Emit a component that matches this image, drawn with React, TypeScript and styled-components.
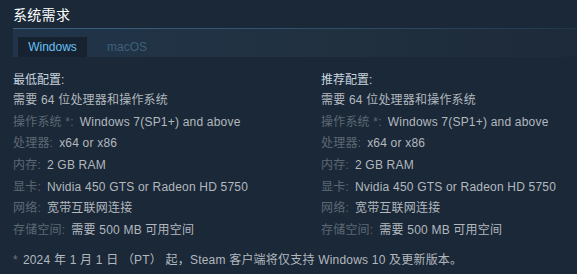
import React from "react";
import styled, { createGlobalStyle } from "styled-components";

const Global = createGlobalStyle`
  html, body { margin: 0; padding: 0; background: #1b2838; }
  body { font-family: "Liberation Sans", Arial, "Noto Sans CJK SC", sans-serif; }
`;

const Page = styled.div`
  width: 577px;
  height: 274px;
  box-sizing: border-box;
  padding: 8px 0 0 13px;
  background: #1b2838;
  overflow: hidden;
`;

const Title = styled.h2`
  margin: 0;
  font-size: 14px;
  line-height: 14px;
  font-weight: normal;
  color: #ffffff;
  letter-spacing: 0.3px;
`;

const TabBar = styled.div`
  margin-top: 6px;
  height: 29px;
  box-sizing: border-box;
  padding: 9px 0 0 5px;
  display: flex;
  align-items: flex-end;
  border-top: 1px solid;
  border-image: linear-gradient(90deg, #3b6282 0%, #2e4d66 60%, #22364a 100%) 1;
  background: linear-gradient(90deg, #213449 0%, #20303f 60%, #1d2a39 100%);
`;

const Tab = styled.div<{ $active?: boolean }>`
  height: 20px;
  width: ${(p) => (p.$active ? "69px" : "auto")};
  padding: ${(p) => (p.$active ? "0" : "0 0 0 20px")};
  display: flex;
  align-items: center;
  justify-content: ${(p) => (p.$active ? "center" : "flex-start")};
  font-size: 12px;
  color: ${(p) => (p.$active ? "#66c0f4" : "#3e6079")};
  background: ${(p) => (p.$active ? "#172231" : "transparent")};
`;

const Columns = styled.div`
  display: grid;
  grid-template-columns: 308px 1fr;
  margin-top: 14px;
`;

const Column = styled.div`
  display: flex;
  flex-direction: column;
`;

const Heading = styled.div`
  font-size: 12px;
  line-height: 18px;
  color: #c6d4df;
  margin-bottom: 2px;
`;

const Row = styled.div`
  font-size: 12px;
  line-height: 18px;
  height: 21.67px;
  color: #b2b8be;
  white-space: nowrap;
  letter-spacing: 0.2px;
`;

const Label = styled.span`
  color: #5b6874;
  margin-right: 6px;
`;

const Note = styled.div`
  margin-top: 8px;
  font-size: 12px;
  line-height: 18px;
  color: #b2b8be;
  white-space: nowrap;
  letter-spacing: 0.2px;
`;

const Star = styled.span`
  color: #6b7884;
  margin-right: 5px;
`;

type Spec = { label?: string; value: string };

const specs: Spec[] = [
  { value: "需要 64 位处理器和操作系统" },
  { label: "操作系统 *:", value: "Windows 7(SP1+) and above" },
  { label: "处理器:", value: "x64 or x86" },
  { label: "内存:", value: "2 GB RAM" },
  { label: "显卡:", value: "Nvidia 450 GTS or Radeon HD 5750" },
  { label: "网络:", value: "宽带互联网连接" },
  { label: "存储空间:", value: "需要 500 MB 可用空间" },
];

const SpecColumn = ({ title }: { title: string }) => (
  <Column>
    <Heading>{title}</Heading>
    {specs.map((s, i) => (
      <Row key={i}>
        {s.label && <Label>{s.label}</Label>}
        {s.value}
      </Row>
    ))}
  </Column>
);

export default function App() {
  return (
    <>
      <Global />
      <Page>
        <Title>系统需求</Title>
        <TabBar>
          <Tab $active>Windows</Tab>
          <Tab>macOS</Tab>
        </TabBar>
        <Columns>
          <SpecColumn title="最低配置:" />
          <SpecColumn title="推荐配置:" />
        </Columns>
        <Note>
          <Star>*</Star>2024 年 1 月 1 日 （PT） 起，Steam 客户端将仅支持 Windows 10 及更新版本。
        </Note>
      </Page>
    </>
  );
}
